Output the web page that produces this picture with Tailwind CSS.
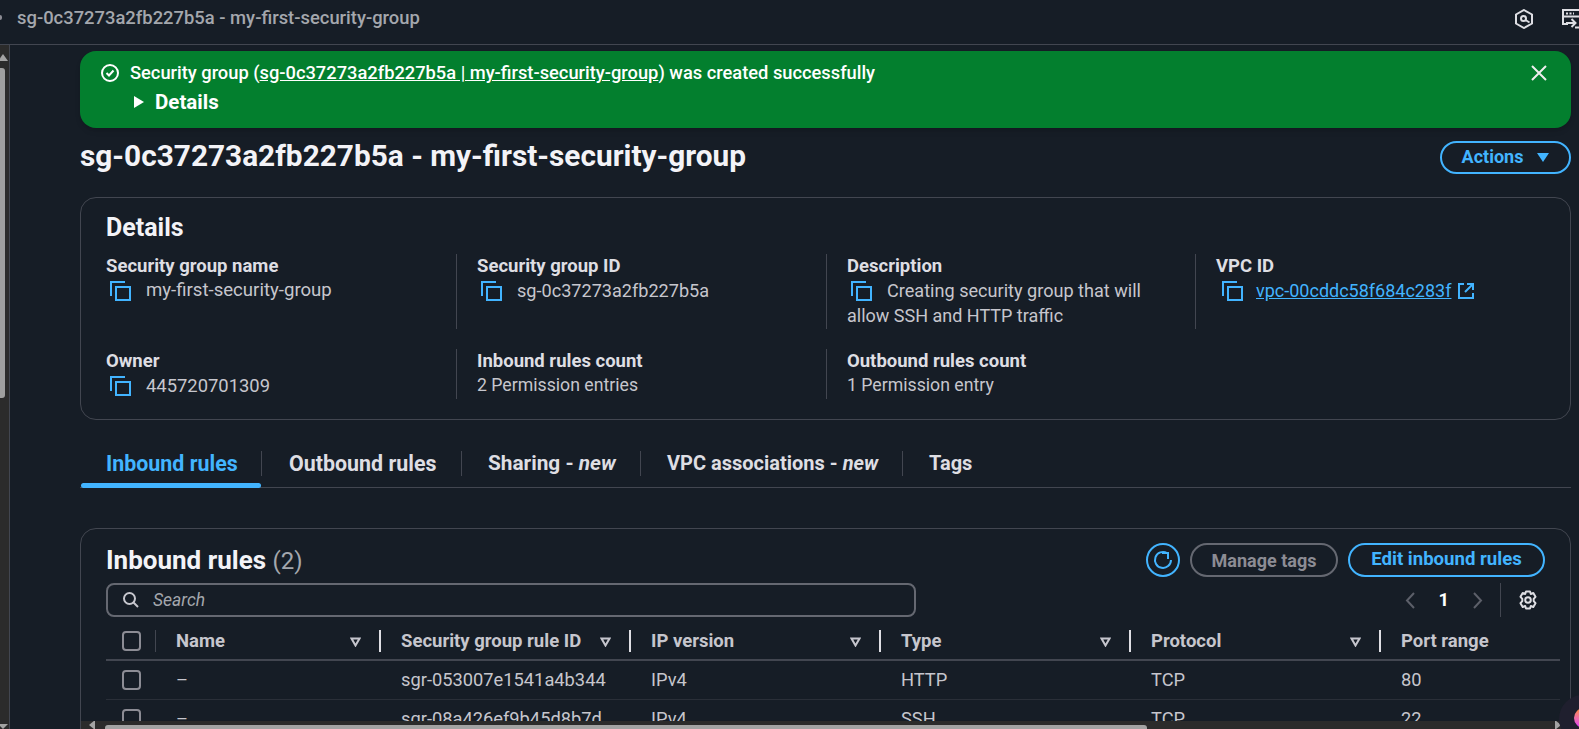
<!DOCTYPE html>
<html lang="en">
<head>
<meta charset="utf-8">
<title>Security group</title>
<script src="https://cdn.jsdelivr.net/npm/@tailwindcss/browser@4"></script>
</head>
<body class="relative w-[1579px] h-[729px] overflow-hidden bg-[#161d26] text-[#dedee3] font-['Roboto',sans-serif] text-[18.3px]">

<!-- Top bar -->
<header class="h-[45px] border-b border-[#424650] flex items-center justify-between overflow-hidden">
  <div class="flex items-center -mt-[8px]">
    <span class="w-[2px] h-[5px] rounded-r-full bg-[#8c8c94]"></span>
    <span class="ml-[15px] text-[18.4px] font-medium text-[#a4a7ad]">sg-0c37273a2fb227b5a - my-first-security-group</span>
  </div>
  <div class="flex items-center -mt-[7px] -mr-[7px]">
    <svg class="w-[18px] h-[20px] shrink-0" viewBox="0 0 18 20" fill="none" stroke="#dedee3" stroke-width="2"><path d="M9 1 17 5.500V14.500L9 19 1 14.500V5.500Z"/><circle cx="8.500" cy="9.500" r="2.500"/><path d="M10.500 11 14.500 13.500"/></svg>
    <svg class="w-[24px] h-[20px] ml-[29px] shrink-0" viewBox="0 0 24 20" fill="none" stroke="#dedee3" stroke-width="2"><path d="M6 15H1V1H24"/><path d="M4 4.500H12" stroke-dasharray="2 1.500"/><path d="M1 7.500H24"/><path d="M4 14H13M9.500 10 13.500 14 9.500 18"/><path d="M13 18.500H24"/></svg>
  </div>
</header>

<div class="flex h-[684px] relative">
  <!-- Left scrollbar -->
  <div class="w-[10px] shrink-0 bg-[#2b2b2b] border-r border-[#424650] flex flex-col items-start overflow-hidden">
    <div class="w-0 h-0 -ml-[2px] mt-[9px] border-x-[5px] border-x-transparent border-b-[7px] border-b-[#a3a3a3]"></div>
    <div class="w-[5px] h-[330px] mt-[7px] bg-[#9f9f9f] rounded-r-[3px]"></div>
    <div class="w-0 h-0 -ml-[2px] mt-auto border-x-[5px] border-x-transparent border-t-[5px] border-t-[#a3a3a3]"></div>
  </div>

  <main class="flex-1 pl-[70px] pr-[8px] pt-[6px] overflow-hidden">
    <!-- Flash -->
    <div class="h-[77px] bg-[#037f2e] rounded-[16px] flex justify-between text-white pl-[20px] pr-[24px] pt-[12px] shadow-md">
      <div>
        <div class="flex items-center gap-[10px] h-[20px]">
          <svg class="w-[20px] h-[20px]" viewBox="0 0 20 20" fill="none" stroke="#fff" stroke-width="2"><circle cx="10" cy="10" r="8"/><path d="M6.500 10 9 12.500 13.500 7.500"/></svg>
          <span class="font-medium">Security group (<a class="underline">sg-0c37273a2fb227b5a | my-first-security-group</a>) was created successfully</span>
        </div>
        <div class="flex items-center gap-[11px] ml-[34px] mt-[9px] h-[20px]">
          <span class="w-0 h-0 border-y-[6px] border-y-transparent border-l-[10px] border-l-white"></span>
          <span class="text-[20.5px] font-bold">Details</span>
        </div>
      </div>
      <svg class="w-[16px] h-[16px] mt-[2px]" viewBox="0 0 16 16" fill="none" stroke="#eee" stroke-width="2"><path d="M1 1 15 15M15 1 1 15"/></svg>
    </div>

    <!-- Title -->
    <div class="flex justify-between items-center mt-[12px] h-[34px]">
      <h1 class="text-[29.8px] font-bold text-[#f3f3f7] -mt-[1px]">sg-0c37273a2fb227b5a - my-first-security-group</h1>
      <button class="h-[33px] w-[131px] border-2 border-[#42b4ff] rounded-full text-[#42b4ff] text-[18px] font-bold flex items-center justify-center gap-[14px] pb-[2px]">Actions <span class="w-0 h-0 mt-[2px] border-x-[6px] border-x-transparent border-t-[9px] border-t-[#42b4ff]"></span></button>
    </div>

    <!-- Details -->
    <section class="mt-[23px] h-[223px] border border-[#424650] rounded-[16px] px-[25px] pt-[15px]">
      <h2 class="text-[25px] leading-[30px] font-bold text-[#f3f3f7]">Details</h2>
      <div class="grid grid-cols-[350px_370px_369px_1fr] mt-[11px]">
        <div class="h-[75px]">
          <div class="font-bold text-[18.5px] leading-[24px]">Security group name</div>
          <div class="flex items-center h-[25px] text-[#c6c6cd] text-[18.6px]"><svg class="w-[21px] h-[20px] ml-[4px] mr-[15px]" viewBox="0 0 21 20" fill="none" stroke="#42b4ff" stroke-width="2"><path d="M1 15V1H15"/><path d="M6 6H20V19H6Z"/></svg>my-first-security-group</div>
        </div>
        <div class="h-[75px] border-l border-[#424650] pl-[20px]">
          <div class="font-bold text-[18.5px] leading-[24px]">Security group ID</div>
          <div class="flex items-center h-[25px] text-[#c6c6cd] text-[18.1px]"><svg class="w-[21px] h-[20px] ml-[4px] mr-[15px]" viewBox="0 0 21 20" fill="none" stroke="#42b4ff" stroke-width="2"><path d="M1 15V1H15"/><path d="M6 6H20V19H6Z"/></svg>sg-0c37273a2fb227b5a</div>
        </div>
        <div class="h-[75px] border-l border-[#424650] pl-[20px]">
          <div class="font-bold text-[18.5px] leading-[24px]">Description</div>
          <div class="flex items-center h-[25px] text-[#c6c6cd] text-[18.1px]"><svg class="w-[21px] h-[20px] ml-[4px] mr-[15px]" viewBox="0 0 21 20" fill="none" stroke="#42b4ff" stroke-width="2"><path d="M1 15V1H15"/><path d="M6 6H20V19H6Z"/></svg>Creating security group that will</div>
          <div class="h-[25px] leading-[25px] text-[#c6c6cd] text-[18px]">allow SSH and HTTP traffic</div>
        </div>
        <div class="h-[75px] border-l border-[#424650] pl-[20px]">
          <div class="font-bold text-[18.5px] leading-[24px]">VPC ID</div>
          <div class="flex items-center h-[25px] text-[#42b4ff] text-[18px]"><svg class="w-[21px] h-[20px] ml-[6px] mr-[13px]" viewBox="0 0 21 20" fill="none" stroke="#42b4ff" stroke-width="2"><path d="M1 15V1H15"/><path d="M6 6H20V19H6Z"/></svg><a class="underline">vpc-00cddc58f684c283f</a><svg class="w-[18px] h-[18px] ml-[6px]" viewBox="0 0 18 18" fill="none" stroke="#42b4ff" stroke-width="2"><path d="M7 2H2V16H16V11"/><path d="M10 2H16V8M16 2 8 10"/></svg></div>
        </div>
      </div>
      <div class="grid grid-cols-[350px_370px_1fr] mt-[20px]">
        <div class="h-[50px]">
          <div class="font-bold text-[18.5px] leading-[24px]">Owner</div>
          <div class="flex items-center h-[25px] text-[#c6c6cd] text-[18.4px]"><svg class="w-[21px] h-[20px] ml-[4px] mr-[15px]" viewBox="0 0 21 20" fill="none" stroke="#42b4ff" stroke-width="2"><path d="M1 15V1H15"/><path d="M6 6H20V19H6Z"/></svg>445720701309</div>
        </div>
        <div class="h-[50px] border-l border-[#424650] pl-[20px]">
          <div class="font-bold text-[18.5px] leading-[24px]">Inbound rules count</div>
          <div class="h-[25px] leading-[25px] text-[#c6c6cd] text-[17.7px]">2 Permission entries</div>
        </div>
        <div class="h-[50px] border-l border-[#424650] pl-[20px]">
          <div class="font-bold text-[18.5px] leading-[24px]">Outbound rules count</div>
          <div class="h-[25px] leading-[25px] text-[#c6c6cd] text-[17.7px]">1 Permission entry</div>
        </div>
      </div>
    </section>

    <!-- Tabs -->
    <nav class="mt-[31px] h-[37px] flex items-start border-b border-[#424650] text-[20.8px] leading-[25px] font-bold whitespace-nowrap">
      <div class="relative h-[36px] w-[181px] pl-[26px] text-[21.4px] text-[#42b4ff]">Inbound rules<span class="absolute left-[1px] right-0 -bottom-[1px] h-[5px] rounded-full bg-[#42b4ff]"></span></div>
      <div class="h-[25px] w-[1px] bg-[#424650]"></div>
      <div class="w-[199px] pl-[27px] text-[21.4px]">Outbound rules</div>
      <div class="h-[25px] w-[1px] bg-[#424650]"></div>
      <div class="w-[178px] pl-[26px]">Sharing - <i>new</i></div>
      <div class="h-[25px] w-[1px] bg-[#424650]"></div>
      <div class="w-[261px] pl-[26px] text-[20px]">VPC associations - <i>new</i></div>
      <div class="h-[25px] w-[1px] bg-[#424650]"></div>
      <div class="pl-[26px] text-[20px]">Tags</div>
    </nav>

    <!-- Rules -->
    <section class="mt-[40px] h-[240px] border border-[#424650] rounded-t-[16px] px-[25px] pt-[14px] overflow-hidden">
      <div class="flex justify-between items-start h-[34px]">
        <h2 class="text-[26px] leading-[34px] font-bold text-[#f3f3f7]">Inbound rules <span class="font-normal text-[24px] text-[#a4a7ad]">(2)</span></h2>
        <div class="flex items-center gap-[10px]">
          <span class="w-[34px] h-[34px] rounded-full border-2 border-[#42b4ff] flex items-center justify-center"><svg class="w-[22px] h-[22px]" viewBox="0 0 22 22" fill="none" stroke="#42b4ff" stroke-width="2"><path d="M15 4A8 8 0 1 0 19 11"/><path d="M10 4H16V10"/></svg></span>
          <span class="h-[34px] w-[148px] rounded-full border-2 border-[#656871] text-[#8c8c94] text-[18px] font-bold flex items-center justify-center">Manage tags</span>
          <span class="h-[34px] w-[197px] rounded-full border-2 border-[#42b4ff] text-[#42b4ff] text-[18.6px] font-bold flex items-center justify-center whitespace-nowrap">Edit inbound rules</span>
        </div>
      </div>
      <div class="flex justify-between mt-[6px] h-[34px]">
        <div class="w-[810px] h-[34px] border-2 border-[#656871] rounded-[8px] flex items-center pl-[14px] text-[#a4a7ad] text-[17.5px] italic gap-[13px]">
          <svg class="w-[18px] h-[18px]" viewBox="0 0 18 18" fill="none" stroke="#c6c6cd" stroke-width="2"><circle cx="7.500" cy="7.500" r="5.500"/><path d="M11.500 11.500 16 16"/></svg>Search
        </div>
        <div class="flex items-center h-[34px] text-[#5c5f69] pr-[7px]">
          <svg class="w-[10px] h-[17px] mr-[24px]" viewBox="0 0 10 17" fill="none" stroke="currentColor" stroke-width="2"><path d="M9 1 2 8.500 9 16"/></svg>
          <span class="text-white font-bold mr-[24px]">1</span>
          <svg class="w-[10px] h-[17px] mr-[17px]" viewBox="0 0 10 17" fill="none" stroke="currentColor" stroke-width="2"><path d="M1 1 8 8.500 1 16"/></svg>
          <span class="w-[1px] h-[34px] bg-[#424650] mr-[17px]"></span>
          <svg class="w-[20px] h-[20px]" viewBox="0 0 20 20" fill="none" stroke="#dedee3" stroke-width="2" stroke-linejoin="round"><circle cx="10" cy="10" r="2.800"/><path d="M8 1.500H12L12.800 4 15.300 3 17.500 6.800 15.700 8.800V11.200L17.500 13.200 15.300 17 12.800 16 12 18.500H8L7.200 16 4.700 17 2.500 13.200 4.300 11.200V8.800L2.500 6.800 4.700 3 7.200 4Z"/></svg>
        </div>
      </div>
      <!-- Table -->
      <table class="mt-[2px] w-[1454px] table-fixed border-collapse text-left">
        <colgroup><col class="w-[49px]"><col class="w-[224px]"><col class="w-[250px]"><col class="w-[250px]"><col class="w-[250px]"><col class="w-[250px]"><col></colgroup>
        <thead>
          <tr class="h-[41px] border-b-2 border-[#424650] font-bold text-[18.5px] text-[#c6c6cd]">
            <th class="pl-[16px] pt-[3px]"><span class="block w-[19px] h-[20px] border-2 border-[#8c8c94] rounded-[4px]"></span></th>
            <th class="pt-[4px]"><div class="flex items-center justify-between border-l border-[#424650] h-[22px] pl-[20px] pt-[2px]">Name<svg class="w-[11px] h-[10px] mr-[18px]" viewBox="0 0 11 10" fill="none" stroke="#c6c6cd" stroke-width="2"><path d="M1.500 1.500H9.500L5.500 8.500Z"/></svg></div></th>
            <th class="pt-[4px]"><div class="flex items-center justify-between border-l-2 border-[#dedee3] h-[22px] pl-[20px] pt-[2px] whitespace-nowrap">Security group rule ID<svg class="w-[11px] h-[10px] mr-[18px]" viewBox="0 0 11 10" fill="none" stroke="#c6c6cd" stroke-width="2"><path d="M1.500 1.500H9.500L5.500 8.500Z"/></svg></div></th>
            <th class="pt-[4px]"><div class="flex items-center justify-between border-l-2 border-[#dedee3] h-[22px] pl-[20px] pt-[2px]">IP version<svg class="w-[11px] h-[10px] mr-[18px]" viewBox="0 0 11 10" fill="none" stroke="#c6c6cd" stroke-width="2"><path d="M1.500 1.500H9.500L5.500 8.500Z"/></svg></div></th>
            <th class="pt-[4px]"><div class="flex items-center justify-between border-l-2 border-[#dedee3] h-[22px] pl-[20px] pt-[2px]">Type<svg class="w-[11px] h-[10px] mr-[18px]" viewBox="0 0 11 10" fill="none" stroke="#c6c6cd" stroke-width="2"><path d="M1.500 1.500H9.500L5.500 8.500Z"/></svg></div></th>
            <th class="pt-[4px]"><div class="flex items-center justify-between border-l-2 border-[#dedee3] h-[22px] pl-[20px] pt-[2px]">Protocol<svg class="w-[11px] h-[10px] mr-[18px]" viewBox="0 0 11 10" fill="none" stroke="#c6c6cd" stroke-width="2"><path d="M1.500 1.500H9.500L5.500 8.500Z"/></svg></div></th>
            <th class="pt-[4px]"><div class="flex items-center border-l-2 border-[#dedee3] h-[22px] pl-[20px] pt-[2px]">Port range</div></th>
          </tr>
        </thead>
        <tbody class="text-[#c6c6cd]">
          <tr class="h-[39px] border-b border-[#2a2f38]">
            <td class="pl-[16px]"><span class="block w-[19px] h-[20px] border-2 border-[#8c8c94] rounded-[4px]"></span></td>
            <td class="pl-[21px]">–</td><td class="pl-[22px]">sgr-053007e1541a4b344</td><td class="pl-[22px]">IPv4</td><td class="pl-[22px]">HTTP</td><td class="pl-[22px]">TCP</td><td class="pl-[22px]">80</td>
          </tr>
          <tr class="h-[39px]">
            <td class="pl-[16px]"><span class="block w-[19px] h-[20px] border-2 border-[#8c8c94] rounded-[4px]"></span></td>
            <td class="pl-[21px]">–</td><td class="pl-[22px]">sgr-08a426ef9b45d8b7d</td><td class="pl-[22px]">IPv4</td><td class="pl-[22px]">SSH</td><td class="pl-[22px]">TCP</td><td class="pl-[22px]">22</td>
          </tr>
        </tbody>
      </table>
    </section>
  </main>

  <!-- Bottom scrollbar -->
  <div class="absolute left-[81px] right-0 bottom-0 h-[8px] bg-[#2b2b2b] flex items-end overflow-hidden">
    <div class="ml-[8px] mb-[-1px] w-0 h-0 border-y-[5px] border-y-transparent border-r-[6px] border-r-[#a3a3a3]"></div>
    <div class="ml-[10px] w-[1042px] h-[4px] bg-[#a3a3a3] rounded-t-[3px]"></div>
    <div class="ml-auto mr-[18px] mb-[-1px] w-0 h-0 border-y-[5px] border-y-transparent border-l-[6px] border-l-[#a3a3a3]"></div>
  </div>
</div>

<!-- Floating assistant badge -->
<div class="absolute left-[1559px] top-[695px] w-[48px] h-[48px] rounded-full bg-[#1f1f2e] overflow-hidden">
  <div class="absolute left-[15px] top-[13px] w-[20px] h-[20px] rounded-full bg-linear-to-b from-orange-400 to-fuchsia-500"></div>
</div>
</body>
</html>
